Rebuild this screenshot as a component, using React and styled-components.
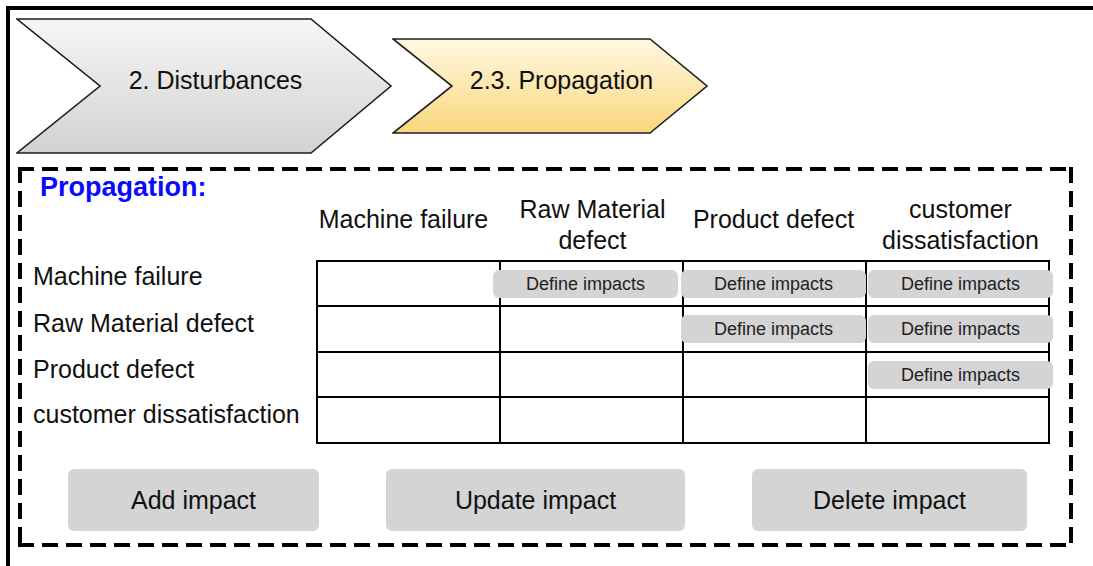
import React from "react";
import styled, { createGlobalStyle } from "styled-components";

const GlobalStyle = createGlobalStyle`
  html, body {
    margin: 0;
    padding: 0;
    background: #fff;
    overflow: hidden;
  }
  body {
    font-family: "Liberation Sans", Arial, sans-serif;
    color: #111;
  }
`;

const causes = [
  "Machine failure",
  "Raw Material defect",
  "Product defect",
  "customer dissatisfaction",
];

const headers = [
  { text: "Machine failure", lines: 1, dx: -5 },
  { text: ["Raw Material", "defect"], lines: 2, dx: 0 },
  { text: "Product defect", lines: 1, dx: -2 },
  { text: ["customer", "dissatisfaction"], lines: 2, dx: 2 },
];

// which cells hold a "Define impacts" button
const impacts = [
  [false, true, true, true],
  [false, false, true, true],
  [false, false, false, true],
  [false, false, false, false],
];

// buttons sit a little off the cell grid in the original
const shifts = [0, -8, -3, 1];

export default function App() {
  return (
    <>
      <GlobalStyle />
      <Frame>
        <Steps>
          <Chevron $w={377} $h={136}>
            <svg width="377" height="136" viewBox="0 0 377 136">
              <defs>
                <linearGradient id="grayFill" x1="0" y1="0" x2="0" y2="1">
                  <stop offset="0" stopColor="#f6f6f6" />
                  <stop offset="1" stopColor="#d2d2d2" />
                </linearGradient>
              </defs>
              <polygon
                points="1,1 295,1 375,68 295,135 1,135 84,68"
                fill="url(#grayFill)"
                stroke="#1e1e1e"
                strokeWidth="1.6"
              />
            </svg>
            <StepLabel>2. Disturbances</StepLabel>
          </Chevron>
          <Chevron $w={317} $h={96} $overlap>
            <svg width="317" height="96" viewBox="0 0 317 96">
              <defs>
                <linearGradient id="yellowFill" x1="0" y1="0" x2="0" y2="1">
                  <stop offset="0" stopColor="#fff8e2" />
                  <stop offset="1" stopColor="#f9d77c" />
                </linearGradient>
              </defs>
              <polygon
                points="1,1 258,1 315,48 258,95 1,95 60,48"
                fill="url(#yellowFill)"
                stroke="#1e1e1e"
                strokeWidth="1.6"
              />
            </svg>
            <StepLabel>2.3. Propagation</StepLabel>
          </Chevron>
        </Steps>

        <Panel>
          <Matrix>
            <Title>Propagation:</Title>
            {headers.map((h, i) => (
              <ColHeader key={i} $lines={h.lines} $dx={h.dx}>
                {Array.isArray(h.text)
                  ? h.text.map((t) => <span key={t}>{t}</span>)
                  : h.text}
              </ColHeader>
            ))}

            {causes.map((cause, r) => (
              <React.Fragment key={cause}>
                <RowLabel>{cause}</RowLabel>
                {impacts[r].map((has, c) => (
                  <Cell key={c} $first={c === 0} $top={r === 0}>
                    {has && (
                      <DefineButton $shift={shifts[c]}>Define impacts</DefineButton>
                    )}
                  </Cell>
                ))}
              </React.Fragment>
            ))}
          </Matrix>

          <Actions>
            <ActionButton $w={251}>Add impact</ActionButton>
            <ActionButton $w={299}>Update impact</ActionButton>
            <ActionButton $w={275}>Delete impact</ActionButton>
          </Actions>
        </Panel>
      </Frame>
    </>
  );
}

const Frame = styled.div`
  margin: 6px 0 0 6px;
  height: calc(100vh - 6px);
  border-top: 4px solid #000;
  border-left: 4px solid #000;
  box-sizing: border-box;
`;

const Steps = styled.div`
  display: flex;
  align-items: center;
  margin: 8px 0 0 6px;
`;

const Chevron = styled.div`
  position: relative;
  width: ${(p) => p.$w}px;
  height: ${(p) => p.$h}px;
  margin-left: ${(p) => (p.$overlap ? "-1px" : "0")};
  display: flex;
  align-items: center;
  justify-content: center;

  svg {
    position: absolute;
    inset: 0;
  }
`;

const StepLabel = styled.span`
  position: relative;
  font-size: 25px;
  color: #111;
  padding: 0 0 12px 22px;
`;

const dash = (dir) =>
  `repeating-linear-gradient(${dir}, #000 0 16px, transparent 16px 24px)`;

const Panel = styled.div`
  margin: 13px 0 0 8px;
  width: 1055px;
  height: 380px;
  box-sizing: border-box;
  padding: 4px;
  background:
    ${dash("90deg")} left top / 100% 4px no-repeat,
    ${dash("90deg")} left bottom / 100% 4px no-repeat,
    ${dash("180deg")} left top / 4px 100% no-repeat,
    ${dash("180deg")} right top / 4px 100% no-repeat;
  display: flex;
  flex-direction: column;
`;

const Matrix = styled.div`
  display: grid;
  grid-template-columns: 283px 185px 183px 183px 183px;
  grid-template-rows: 89px 47px 46px 45px 46px;
  margin-left: 11px;
`;

const Title = styled.div`
  align-self: start;
  margin: 1px 0 0 7px;
  font-size: 27px;
  line-height: 30px;
  font-weight: 700;
  color: #0a0aff;
`;

const ColHeader = styled.div`
  display: flex;
  flex-direction: column;
  align-items: center;
  justify-content: center;
  padding-top: ${(p) => (p.$lines === 2 ? 18 : 7)}px;
  transform: translateX(${(p) => p.$dx}px);
  font-size: 25px;
  line-height: 31px;
  text-align: center;
  white-space: nowrap;
`;

const RowLabel = styled.div`
  font-size: 25px;
  line-height: 30px;
  margin-top: 1px;
  white-space: nowrap;
`;

const Cell = styled.div`
  box-sizing: border-box;
  border-right: 2px solid #000;
  border-bottom: 2px solid #000;
  ${(p) => p.$first && "border-left: 2px solid #000;"}
  ${(p) => p.$top && "border-top: 2px solid #000;"}
  padding-top: 8px;
`;

const DefineButton = styled.div`
  width: 185px;
  height: 28px;
  margin-left: ${(p) => p.$shift}px;
  background: #d4d4d4;
  border-radius: 6px;
  display: flex;
  align-items: center;
  justify-content: center;
  font-size: 18px;
  color: #222;
`;

const Actions = styled.div`
  display: flex;
  gap: 67px;
  margin: 25px 0 0 46px;
`;

const ActionButton = styled.div`
  width: ${(p) => p.$w}px;
  height: 62px;
  background: #d4d4d4;
  border-radius: 6px;
  display: flex;
  align-items: center;
  justify-content: center;
  font-size: 25px;
  color: #111;
`;
